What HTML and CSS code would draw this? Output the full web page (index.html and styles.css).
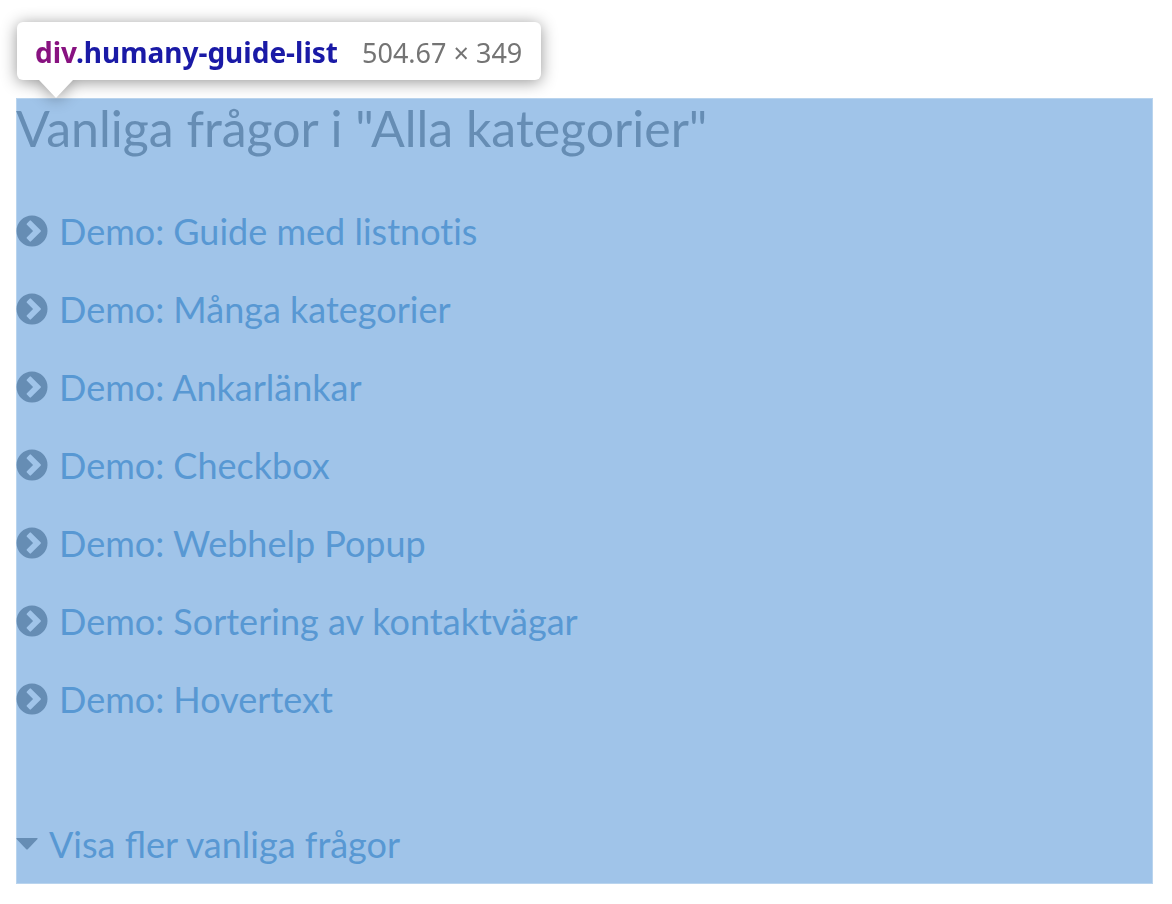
FILE: index.html
```html
<!DOCTYPE html>
<html lang="sv">
<head>
<meta charset="utf-8">
<meta name="viewport" content="width=device-width, initial-scale=1">
<title>Vanliga frågor</title>
<link rel="stylesheet" href="styles.css">
</head>
<body>
<svg class="sprite" aria-hidden="true">
  <symbol id="chevron" viewBox="0 0 32 32">
    <path fill-rule="evenodd" d="M16 .5a15.500 15.500 0 1 1 0 31a15.500 15.500 0 1 1 0-31zM13.600 5.700L10.900 8.400a1 1 0 0 0 0 1.400L17.100 16l-6.200 6.200a1 1 0 0 0 0 1.400l2.700 2.700a1 1 0 0 0 1.400 0l9.600-9.600a1 1 0 0 0 0-1.400L15 5.700a1 1 0 0 0-1.400 0z"/>
  </symbol>
</svg>
<div class="inspector">
  <span class="selector"><span class="tag">div</span>.humany-guide-list</span>
  <span class="size">504.67 × 349</span>
</div>
<main class="guide-list">
  <h1 class="title">Vanliga frågor i "Alla kategorier"</h1>
  <ul class="guides">
    <li class="guide"><svg class="bullet" aria-hidden="true"><use href="#chevron"/></svg><a class="link" href="#">Demo: Guide med listnotis</a></li>
    <li class="guide"><svg class="bullet" aria-hidden="true"><use href="#chevron"/></svg><a class="link" href="#">Demo: Många kategorier</a></li>
    <li class="guide"><svg class="bullet" aria-hidden="true"><use href="#chevron"/></svg><a class="link" href="#">Demo: Ankarlänkar</a></li>
    <li class="guide"><svg class="bullet" aria-hidden="true"><use href="#chevron"/></svg><a class="link" href="#">Demo: Checkbox</a></li>
    <li class="guide"><svg class="bullet" aria-hidden="true"><use href="#chevron"/></svg><a class="link" href="#">Demo: Webhelp Popup</a></li>
    <li class="guide"><svg class="bullet" aria-hidden="true"><use href="#chevron"/></svg><a class="link" href="#">Demo: Sortering av kontaktvägar</a></li>
    <li class="guide"><svg class="bullet" aria-hidden="true"><use href="#chevron"/></svg><a class="link" href="#">Demo: Hovertext</a></li>
  </ul>
  <div class="more"><svg class="caret" viewBox="0 0 22 12" aria-hidden="true"><path d="M1 0h20q1 0 .5 1L12 11q-1 1-2 0L.5 1Q0 0 1 0z"/></svg><a class="link" href="#">Visa fler vanliga frågor</a></div>
</main>
</body>
</html>
```
FILE: styles.css
```css
* { box-sizing: border-box; }
body {
  margin: 0;
  padding: 22px 19px 20px 16px;
  background: #fff;
  font-family: Lato, "Liberation Sans", sans-serif;
}
.sprite { position: absolute; width: 0; height: 0; }
.inspector {
  position: relative;
  display: flex;
  align-items: baseline;
  gap: 24px;
  width: fit-content;
  margin: 0 0 18px 1px;
  padding: 12px 19px 9px 18px;
  border-radius: 6px;
  background: #fff;
  filter: drop-shadow(0 2px 8px rgba(0, 0, 0, 0.42));
  font: 28px/36px "Noto Sans", sans-serif;
  white-space: nowrap;
  z-index: 1;
}
.inspector::after {
  content: "";
  position: absolute;
  top: 100%;
  left: 22px;
  border: solid transparent;
  border-width: 18px 17px 0;
  border-top-color: #fff;
}
.selector { color: #1a1aa6; font-weight: 700; }
.tag { color: #881280; }
.size { color: #747474; font-size: 27px; }
.guide-list {
  padding-bottom: 18px;
  box-shadow: inset 0 0 0 1px #b9d4ee;
  background: #a0c4e9;
}
.title {
  margin: 0 0 51px;
  color: #668db4;
  font-size: 50px;
  font-weight: 400;
  line-height: 60px;
}
.guides {
  display: grid;
  gap: 34px;
  margin: 0 0 101px;
  padding: 0;
  list-style: none;
  font-variant-ligatures: none;
}
.guide, .more { display: flex; align-items: center; gap: 11px; line-height: 44px; font-size: 36px; }
.bullet { width: 32px; height: 32px; fill: #668db4; }
.caret { width: 22px; height: 12px; fill: #668db4; }
.link { color: #5898d3; text-decoration: none; }
```
